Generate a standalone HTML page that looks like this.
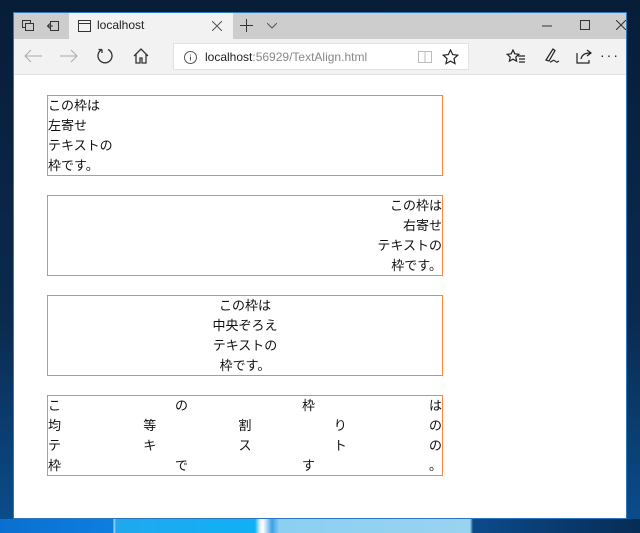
<!DOCTYPE html>
<html><head><meta charset="utf-8"><style>
*{margin:0;padding:0;box-sizing:border-box}
body{width:640px;height:533px;overflow:hidden;position:relative;background:linear-gradient(180deg,#071d38 0%,#0b2a4f 60%,#0a4f8f 100%);font-family:"Liberation Sans","Noto Sans CJK JP",sans-serif}
.bot{position:absolute;left:0;top:519px;width:640px;height:14px;background:linear-gradient(90deg,#0a6fd0 0,#0d7ee0 113px,#a8d8f5 114px,#20a8ee 116px,#10b0f5 255px,#e0f0ff 260px,#ffffff 263px,#3aa0e8 272px,#8ccff0 279px,#9ad3f0 470px,#0c4a8a 473px,#072c55 640px)}
.win{position:absolute;left:13px;top:12px;width:614px;height:507px;background:#fff;border:1px solid #2a79c0;overflow:hidden}
.title{position:absolute;left:0;top:0;width:100%;height:26px;background:#cdcdcd}
.tab{position:absolute;left:55px;top:0;width:164px;height:26px;background:#f2f2f2}
.tool{position:absolute;left:0;top:26px;width:100%;height:36px;background:#f2f2f2;border-bottom:1px solid #e0e0e0}
.addr{position:absolute;left:159px;top:4px;width:296px;height:27px;background:#fff;border:1px solid #e2e2e2}
.t{position:absolute;font-size:12px;color:#222}
svg{position:absolute}
.box{position:absolute;left:33px;width:396px;height:81px;border:1px solid #f7883a;font-size:13px;line-height:20px;color:#111;padding-top:0}
.j div{display:flex;justify-content:space-between;height:20px}
</style></head><body>
<div class="bot"></div>
<div class="win">
 <div class="title">
  <svg style="left:8px;top:7px" width="12" height="12" viewBox="0 0 12 12" fill="none" stroke="#333"><rect x="0.5" y="0.5" width="8" height="7"/><rect x="3.5" y="3.5" width="8" height="7" fill="#cdcdcd"/></svg>
  <svg style="left:33px;top:7px" width="12" height="12" viewBox="0 0 12 12" fill="none" stroke="#333"><rect x="3.5" y="1.5" width="8" height="9"/><path d="M0 6h6M3 3.5L0.5 6 3 8.5"/></svg>
  <div class="tab">
   <svg style="left:9px;top:7px" width="13" height="12" viewBox="0 0 13 12" fill="none" stroke="#333"><rect x="0.5" y="0.5" width="12" height="11"/><path d="M0.5 3.5h12"/></svg>
   <div class="t" style="left:28px;top:5px">localhost</div>
   <svg style="left:143px;top:8px" width="10" height="10" viewBox="0 0 10 10" stroke="#555"><path d="M0 0L10 10M10 0L0 10"/></svg>
  </div>
  <svg style="left:226px;top:6px" width="13" height="13" viewBox="0 0 13 13" stroke="#333"><path d="M6.5 0v13M0 6.5h13"/></svg>
  <svg style="left:253px;top:10px" width="10" height="6" viewBox="0 0 10 6" fill="none" stroke="#555"><path d="M0 0L5 5L10 0"/></svg>
  <svg style="left:528px;top:12px" width="10" height="2"><path d="M0 1h10" stroke="#333"/></svg>
  <svg style="left:566px;top:7px" width="10" height="10" viewBox="0 0 10 10" fill="none" stroke="#333"><rect x="0.5" y="0.5" width="9" height="9"/></svg>
  <svg style="left:602px;top:7px" width="10" height="10" viewBox="0 0 10 10" stroke="#333"><path d="M0 0L10 10M10 0L0 10"/></svg>
 </div>
 <div class="tool">
  <svg style="left:10px;top:10px" width="18" height="14" viewBox="0 0 18 14" fill="none" stroke="#aaa"><path d="M18 7H1M7 1L1 7l6 6"/></svg>
  <svg style="left:46px;top:10px" width="18" height="14" viewBox="0 0 18 14" fill="none" stroke="#aaa"><path d="M0 7h17M11 1l6 6-6 6"/></svg>
  <svg style="left:82px;top:8px" width="18" height="18" viewBox="0 0 18 18" fill="none" stroke="#333" stroke-width="1.3"><path d="M12 2.5A7 7 0 1 1 6 2.5"/><path d="M6 2.5V6M6 2.5H2.5"/></svg>
  <svg style="left:119px;top:9px" width="16" height="16" viewBox="0 0 16 16" fill="none" stroke="#333" stroke-width="1.3"><path d="M1 8L8 1l7 7M3 6v9h4v-5h2v5h4V6"/></svg>
  <div class="addr">
   <svg style="left:10px;top:7px" width="13" height="13" viewBox="0 0 13 13" fill="none" stroke="#555"><circle cx="6.5" cy="6.5" r="6"/><path d="M6.5 5.5v4M6.5 3.5v1"/></svg>
   <div class="t" style="left:31px;top:6px;font-size:12px">localhost<span style="color:#888">:56929/TextAlign.html</span></div>
   <svg style="left:244px;top:6px" width="14" height="14" viewBox="0 0 14 14" fill="none" stroke="#bbb"><rect x="0.5" y="1.5" width="13" height="11"/><path d="M7 1.5v11"/></svg>
   <svg style="left:268px;top:5px" width="17" height="16" viewBox="0 0 17 16" fill="none" stroke="#222" stroke-width="1.2"><path d="M8.5 1l2.2 4.6 5 .6-3.7 3.4 1 5-4.5-2.5-4.5 2.5 1-5L1.3 6.2l5-.6z"/></svg>
  </div>
  <svg style="left:492px;top:10px" width="20" height="15" viewBox="0 0 20 15" fill="none" stroke="#222" stroke-width="1.2"><path d="M7 1l1.8 3.8 4 .5-3 2.8.8 4L7 10.2 3.4 12.1l.8-4-3-2.8 4-.5z"/><path d="M12 7h7M13 10h6M13 13h6"/></svg>
  <svg style="left:530px;top:9px" width="16" height="16" viewBox="0 0 16 16" fill="none" stroke="#222" stroke-width="1.2"><path d="M2 12L9 1l2 1.5-6 10.5zM6 14c2 0 3-3 5-1s2 1 4 0"/></svg>
  <svg style="left:562px;top:9px" width="17" height="16" viewBox="0 0 17 16" fill="none" stroke="#222" stroke-width="1.2"><path d="M1 5v10h12v-3M5 11c1-5 5-6 9-6M11 2l4 3-4 3"/></svg>
  <div class="t" style="left:586px;top:8px;font-size:14px;letter-spacing:2px">···</div>
 </div>
 <div class="box" style="top:82px">この枠は<br>左寄せ<br>テキストの<br>枠です。</div>
 <div class="box" style="top:182px;text-align:right">この枠は<br>右寄せ<br>テキストの<br>枠です。</div>
 <div class="box" style="top:282px;text-align:center">この枠は<br>中央ぞろえ<br>テキストの<br>枠です。</div>
 <div class="box j" style="top:382px">
  <div><span>こ</span><span>の</span><span>枠</span><span>は</span></div>
  <div><span>均</span><span>等</span><span>割</span><span>り</span><span>の</span></div>
  <div><span>テ</span><span>キ</span><span>ス</span><span>ト</span><span>の</span></div>
  <div><span>枠</span><span>で</span><span>す</span><span>。</span></div>
 </div>
</div>
</body></html>
